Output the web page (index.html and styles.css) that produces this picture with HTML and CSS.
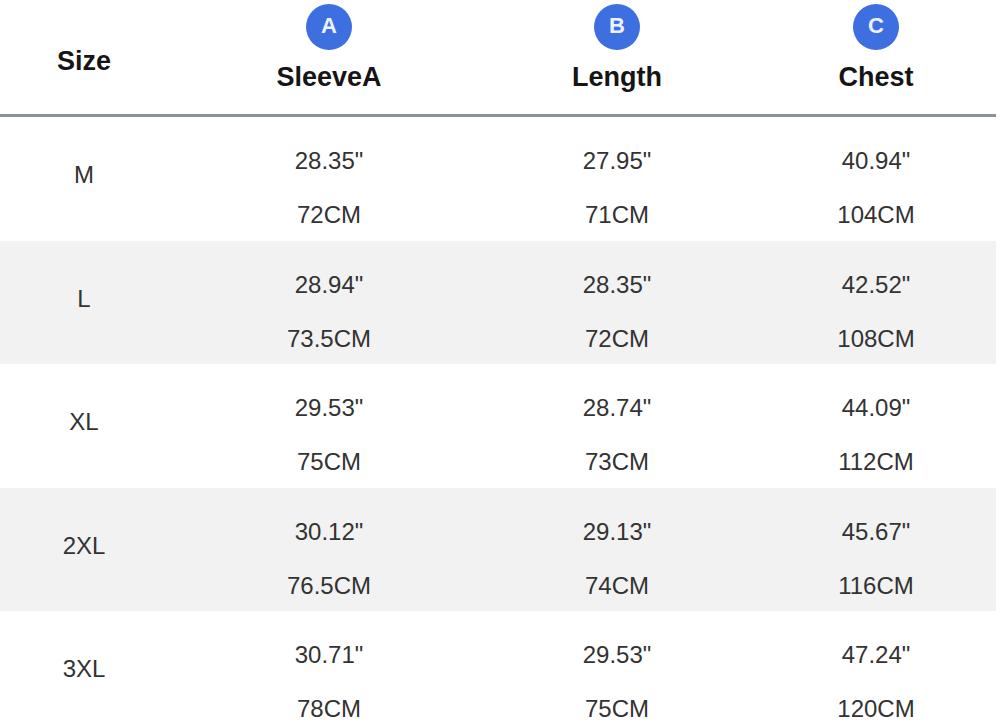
FILE: index.html
```html
<!DOCTYPE html>
<html>
<head>
<meta charset="utf-8">
<link rel="stylesheet" href="styles.css">
</head>
<body>
<div class="chart">
  <div class="head">
    <div class="hcell size-h">Size</div>
    <div class="hcell"><span class="badge">A</span><span class="hlabel">SleeveA</span></div>
    <div class="hcell"><span class="badge">B</span><span class="hlabel">Length</span></div>
    <div class="hcell last"><span class="badge">C</span><span class="hlabel">Chest</span></div>
  </div>

  <div class="row">
    <div class="size">M</div>
    <div class="val"><span>28.35"</span><span>72CM</span></div>
    <div class="val"><span>27.95"</span><span>71CM</span></div>
    <div class="val last"><span>40.94"</span><span>104CM</span></div>
  </div>
  <div class="row shade">
    <div class="size">L</div>
    <div class="val"><span>28.94"</span><span>73.5CM</span></div>
    <div class="val"><span>28.35"</span><span>72CM</span></div>
    <div class="val last"><span>42.52"</span><span>108CM</span></div>
  </div>
  <div class="row">
    <div class="size">XL</div>
    <div class="val"><span>29.53"</span><span>75CM</span></div>
    <div class="val"><span>28.74"</span><span>73CM</span></div>
    <div class="val last"><span>44.09"</span><span>112CM</span></div>
  </div>
  <div class="row shade">
    <div class="size">2XL</div>
    <div class="val"><span>30.12"</span><span>76.5CM</span></div>
    <div class="val"><span>29.13"</span><span>74CM</span></div>
    <div class="val last"><span>45.67"</span><span>116CM</span></div>
  </div>
  <div class="row">
    <div class="size">3XL</div>
    <div class="val"><span>30.71"</span><span>78CM</span></div>
    <div class="val"><span>29.53"</span><span>75CM</span></div>
    <div class="val last"><span>47.24"</span><span>120CM</span></div>
  </div>
</div>
</body>
</html>
```

FILE: styles.css
```css
html, body {
  margin: 0;
  padding: 0;
  background: #ffffff;
}

body {
  font-family: "Liberation Sans", Arial, Helvetica, sans-serif;
  width: 1000px;
  height: 722px;
  overflow: hidden;
}

.chart {
  width: 996px;
}

.head,
.row {
  display: grid;
  grid-template-columns: 168px 322px 254px 252px;
}

.head {
  height: 114px;
  border-bottom: 3px solid #8c9299;
}

.hcell {
  display: flex;
  flex-direction: column;
  align-items: center;
  padding-top: 4px;
  gap: 11px;
}

.hcell.last,
.val.last {
  padding-left: 12px;
}

.size-h {
  padding-top: 45px;
  font-size: 27px;
  line-height: 32px;
  font-weight: bold;
  color: #151515;
}

.badge {
  width: 46px;
  height: 46px;
  border-radius: 50%;
  background: #3d6fe0;
  color: #eef2fd;
  font-weight: bold;
  font-size: 22px;
  display: flex;
  align-items: center;
  justify-content: center;
  line-height: 1;
  padding-bottom: 2px;
  box-sizing: border-box;
}

.hlabel {
  font-size: 27px;
  line-height: 32px;
  font-weight: bold;
  color: #151515;
}

.row {
  height: 123.5px;
  font-size: 24px;
  line-height: 30px;
  color: #333333;
}

.row.shade {
  background: #f2f2f2;
}

.size {
  text-align: center;
  padding-top: 43px;
}

.val {
  display: flex;
  flex-direction: column;
  align-items: center;
  padding-top: 29px;
  gap: 24px;
}
```
